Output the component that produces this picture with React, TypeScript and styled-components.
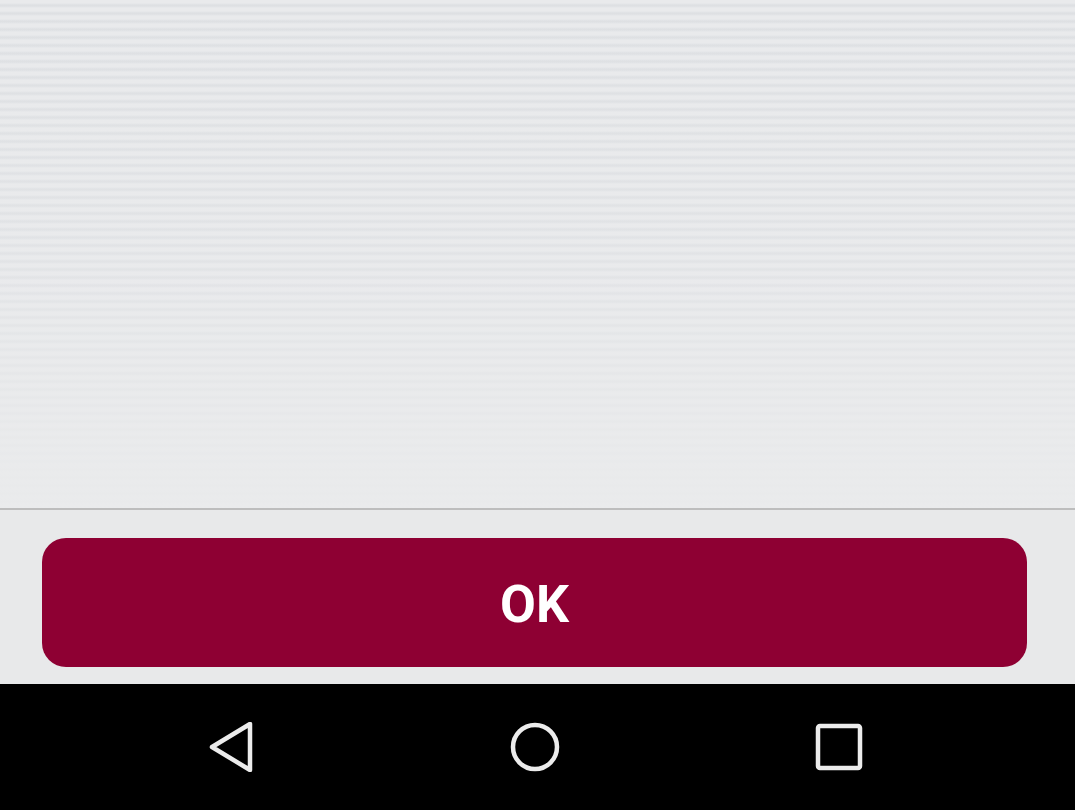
import React from "react";
import styled, { createGlobalStyle } from "styled-components";

const GlobalStyle = createGlobalStyle`
  html, body {
    margin: 0;
    padding: 0;
    background: #000;
  }
  body {
    font-family: Roboto, "Liberation Sans", sans-serif;
  }
`;

const Screen = styled.div`
  width: 1075px;
  height: 810px;
  display: flex;
  flex-direction: column;
  overflow: hidden;
`;

// striped empty content area, stripes fade out towards the bottom
const Content = styled.div`
  height: 508px;
  flex: none;
  background:
    linear-gradient(to bottom, rgba(234, 235, 236, 0) 0%, rgba(234, 235, 236, 0.3) 50%, rgba(234, 235, 236, 0.9) 92%),
    repeating-linear-gradient(
      to bottom,
      #e9eaec 0px,
      #e9eaec 3px,
      #dee0e3 5px,
      #dee0e3 6px,
      #e9eaec 8px
    );
`;

const Divider = styled.div`
  height: 2px;
  flex: none;
  background: #bdbdbd;
`;

const Footer = styled.div`
  height: 174px;
  flex: none;
  background: #e8e9ea;
  padding: 28px 48px 17px 42px;
  box-sizing: border-box;
  display: flex;
`;

const OkButton = styled.button`
  flex: 1;
  border: none;
  border-radius: 24px;
  background: #8e0033;
  color: #fff;
  font-family: Roboto, "Liberation Sans", sans-serif;
  font-weight: 700;
  font-size: 52px;
  letter-spacing: 0;
  padding: 4px 0 0;
  cursor: pointer;
`;

const NavBar = styled.div`
  flex: 1;
  background: #000;
  display: flex;
  align-items: center;
  justify-content: center;
  gap: 254px;
  padding-right: 5px;
`;

const NavIcon = styled.svg`
  width: 50px;
  height: 50px;
  fill: none;
  stroke: #ececec;
  stroke-width: 4.5;
  stroke-linejoin: round;
  stroke-linecap: round;
`;

export default function App() {
  return (
    <>
      <GlobalStyle />
      <Screen>
        <Content />
        <Divider />
        <Footer>
          <OkButton>OK</OkButton>
        </Footer>
        <NavBar>
          <NavIcon viewBox="0 0 50 50">
            <path d="M44 2 L44 48 L6 25 Z" />
          </NavIcon>
          <NavIcon viewBox="0 0 50 50">
            <circle cx="25" cy="25" r="22" />
          </NavIcon>
          <NavIcon viewBox="0 0 50 50">
            <rect x="4" y="4" width="42" height="42" rx="2" />
          </NavIcon>
        </NavBar>
      </Screen>
    </>
  );
}
